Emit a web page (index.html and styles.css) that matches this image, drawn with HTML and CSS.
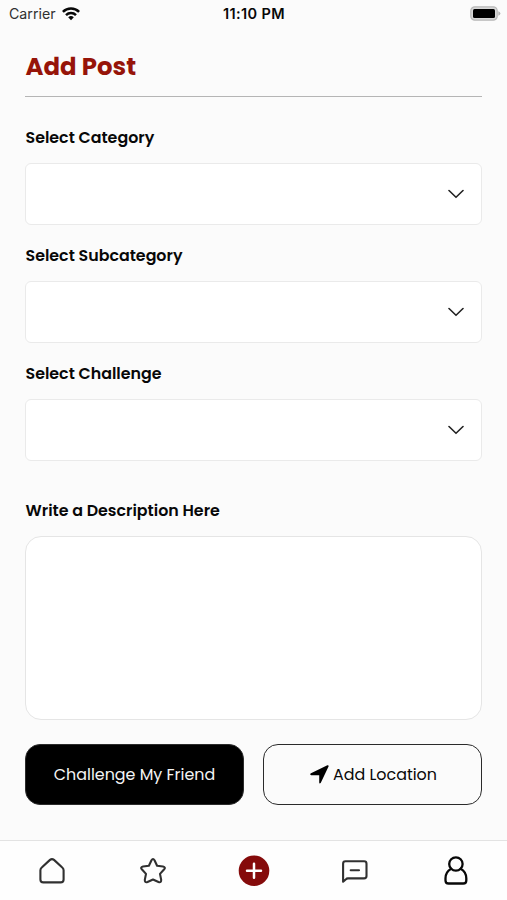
FILE: index.html
```html
<!DOCTYPE html>
<html lang="en">
<head>
<meta charset="utf-8">
<meta name="viewport" content="width=device-width, initial-scale=1">
<title>Add Post</title>
<link rel="stylesheet" href="styles.css">
</head>
<body>
<div class="app">
  <header class="status">
    <div class="carrier"><span>Carrier</span>
      <svg class="wifi" viewBox="0 0 18 14" fill="none" stroke="#080808" stroke-width="2.5"><path d="M.9 4.9C5.4.4 12.600.4 17.100 4.900M4 8.100C6.800 5.400 11.200 5.400 14 8.100"/><path d="M6.200 10.300Q9 7.900 11.800 10.300L9 13.200Z" fill="#080808" stroke="none"/></svg>
    </div>
    <time class="clock">11:10 PM</time>
    <svg class="battery" viewBox="0 0 31 16"><rect x=".8" y=".8" width="26.400" height="13.400" rx="4" fill="#d8d8d8" stroke="#b9b9b9" stroke-width="1.200"/><rect x="3" y="3" width="22" height="9" rx="1.500" fill="#000"/><path d="M28.300 5.200Q30.400 6 30.400 7.500T28.300 9.800Z" fill="#b5b5b5"/></svg>
  </header>
  <main class="content">
    <h1 class="title">Add Post</h1>
    <section class="field">
      <h2 class="label">Select Category</h2>
      <div class="select"><svg class="chevron" viewBox="0 0 16 10"><path d="M1 1.500L8 8.300L15 1.500"/></svg></div>
    </section>
    <section class="field">
      <h2 class="label">Select Subcategory</h2>
      <div class="select"><svg class="chevron" viewBox="0 0 16 10"><path d="M1 1.500L8 8.300L15 1.500"/></svg></div>
    </section>
    <section class="field last">
      <h2 class="label">Select Challenge</h2>
      <div class="select"><svg class="chevron" viewBox="0 0 16 10"><path d="M1 1.500L8 8.300L15 1.500"/></svg></div>
    </section>
    <section class="field">
      <h2 class="label">Write a Description Here</h2>
      <div class="textarea"></div>
    </section>
    <div class="actions">
      <button class="button primary"><span>Challenge My Friend</span></button>
      <button class="button secondary"><svg class="arrow" viewBox="0 0 20 20"><path d="M18.300.3Q20 0 19.500 1.700L11.400 18.700Q9.900 20.400 9.700 18.300V10.700H1.300Q-.8 10.100 1 8.700Z"/></svg><span>Add Location</span></button>
    </div>
  </main>
  <nav class="tabs">
    <svg class="tab" viewBox="0 0 32 32"><path d="M6 12.200Q4.400 13.500 4.400 15.300V24.400Q4.400 27.400 7.400 27.400H24.600Q27.600 27.400 27.600 24.400V15.300Q27.600 13.500 26 12.200L18 4.900Q16 3.200 14 4.900Z"/></svg>
    <svg class="tab" viewBox="0 0 32 32"><path d="M14.500 5.200Q16 2.700 17.500 5.200L20.100 10.800L26 11.500Q29 12.200 27.200 14.300L23 18.900L24.200 24.900Q24.300 28 21.500 27L16 24.500L10.500 27Q7.700 28 7.800 24.900L9 18.900L4.800 14.300Q3 12.200 6 11.500L11.900 10.800Z"/></svg>
    <svg class="tab add" viewBox="0 0 32 32"><circle cx="16" cy="15.700" r="15.300"/><path d="M16 8.700V22.700M9 15.700H23"/></svg>
    <svg class="tab" viewBox="0 0 32 32"><path d="M4.100 26.700V8.700Q4.100 6.300 6.500 6.300H25.100Q27.500 6.300 27.500 8.700V21Q27.500 23.400 25.100 23.400H8.900Q7.700 23.400 7 24.200ZM11.700 15.300H20"/></svg>
    <svg class="tab profile" viewBox="0 0 32 32"><circle cx="15.900" cy="9" r="6.700"/><path d="M11.200 13.700C7.600 15.700 5.500 19.400 5.500 23.300V25.400Q5.500 28.500 8.600 28.500H23.200Q26.300 28.500 26.300 25.400V23.300C26.300 19.400 24.200 15.700 20.600 13.700"/></svg>
  </nav>
</div>
</body>
</html>
```

FILE: styles.css
```css
* { box-sizing: border-box; }
body { margin: 0; background: #fbfbfb; color: #080808; font-family: Poppins, Inter, sans-serif; }
.app { height: 900px; display: flex; flex-direction: column; overflow: hidden; }
.status { height: 28px; padding: 0 6px 0 9px; display: grid; grid-template-columns: 1fr auto 1fr; align-items: center; font-family: Inter, sans-serif; }
.carrier { display: flex; align-items: center; gap: 6px; font-size: 14.2px; line-height: 18px; margin-top: -1px; color: #303030; }
.wifi { width: 18px; height: 14px; }
.clock { margin: -1px 2px 0 0; font-size: 14.5px; font-weight: 600; letter-spacing: .4px; }
.battery { width: 31px; height: 16px; justify-self: end; }
.content { flex: 1; padding: 20px 25px 0; }
.title { height: 49px; margin: 0 0 29px; padding-left: .5px; border-bottom: 1px solid #b5b5b5; color: #961409; font-size: 24.4px; line-height: 37px; font-weight: 700; }
.field { margin-bottom: 19.5px; }
.field.last { margin-bottom: 38.5px; }
.label { height: 26px; margin: 0 0 11px; padding-left: .5px; font-size: 15.85px; line-height: 23px; font-weight: 600; white-space: nowrap; }
.select { height: 61.5px; display: flex; align-items: center; justify-content: flex-end; padding-right: 17.5px; border: 1px solid #eaeaea; border-radius: 6px; background: #fff; }
.chevron { width: 16px; height: 10px; fill: none; stroke: #222; stroke-width: 1.6; stroke-linecap: round; stroke-linejoin: round; }
.textarea { height: 183.5px; border: 1px solid #e5e5e5; border-radius: 16px; background: #fff; }
.actions { margin-top: 24.5px; display: grid; grid-template-columns: 1fr 1fr; gap: 19px; }
.button { height: 61px; display: flex; align-items: center; justify-content: center; gap: 4px; padding: 0; border: 1.4px solid #2b2b2b; border-radius: 15px; font: 400 15.9px/24px Poppins, Inter, sans-serif; white-space: nowrap; }
.primary { background: #000; color: #f4f4f4; }
.secondary { padding-left: 2px; background: #fbfbfb; color: #080808; }
.arrow { width: 19px; height: 19px; fill: #000; }
.tabs { height: 60px; padding-left: 1px; border-top: 1px solid #e3e3e3; background: #fefefe; display: grid; grid-template-columns: repeat(5, 1fr); justify-items: center; align-items: center; }
.tab { width: 32px; height: 32px; fill: none; stroke: #303030; stroke-width: 2.1; stroke-linecap: round; stroke-linejoin: round; }
.add circle { fill: #850b0b; stroke: none; }
.add path { stroke: #fff; stroke-width: 2.5; }
.profile { stroke: #080808; stroke-width: 2.3; }
```
